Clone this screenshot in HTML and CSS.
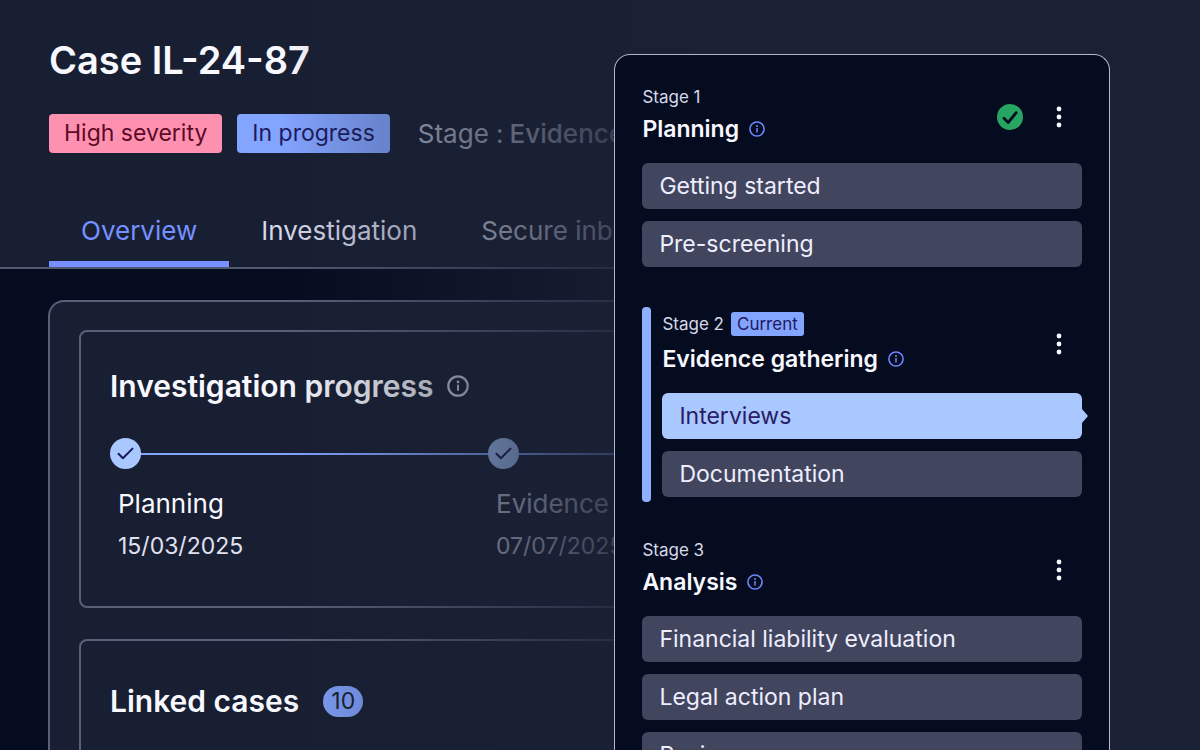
FILE: index.html
```html
<!DOCTYPE html>
<html lang="en">
<head>
<meta charset="utf-8">
<meta name="viewport" content="width=device-width, initial-scale=1">
<title>Case IL-24-87</title>
<link rel="stylesheet" href="styles.css">
</head>
<body>
<svg class="sprite" aria-hidden="true">
  <symbol id="info" viewBox="0 0 24 24"><circle cx="12" cy="12" r="10.6" fill="none" stroke="currentColor" stroke-width="2.4"/><circle cx="12" cy="7.6" r="1.5" fill="currentColor"/><path d="M12 10.6v6.6" stroke="currentColor" stroke-width="2.2"/></symbol>
  <symbol id="dots" viewBox="0 0 6 22"><circle cx="3" cy="3" r="2.4" fill="currentColor"/><circle cx="3" cy="11" r="2.4" fill="currentColor"/><circle cx="3" cy="19" r="2.4" fill="currentColor"/></symbol>
  <symbol id="tick" viewBox="0 0 31 31"><path d="M8.5 15.8l4.4 4.4 9.6-9.6" fill="none" stroke="currentColor" stroke-width="2" stroke-linecap="round" stroke-linejoin="round"/></symbol>
</svg>
<main class="case">
  <header class="case-header">
    <h1 class="case-title">Case IL-24-87</h1>
    <div class="meta">
      <span class="tag tag-severity">High severity</span>
      <span class="tag tag-status">In progress</span>
      <p class="stage-label"><span>Stage :</span> <b>Evidence</b></p>
    </div>
    <nav class="tabs">
      <a class="tab tab-active" href="#overview">Overview</a>
      <a class="tab" href="#investigation">Investigation</a>
      <a class="tab" href="#inbox">Secure inbox</a>
    </nav>
  </header>
  <div class="board">
    <section class="card card-progress">
      <h2 class="card-title">Investigation progress <svg class="title-info"><use href="#info"/></svg></h2>
      <ol class="steps">
        <li class="step">
          <div class="track"><svg class="step-icon"><use href="#tick"/></svg></div>
          <div class="step-name">Planning</div>
          <div class="step-date">15/03/2025</div>
        </li>
        <li class="step">
          <div class="track"><svg class="step-icon"><use href="#tick"/></svg></div>
          <div class="step-name">Evidence</div>
          <div class="step-date">07/07/2025</div>
        </li>
      </ol>
    </section>
    <section class="card card-linked">
      <h2 class="card-title">Linked cases <span class="count">10</span></h2>
    </section>
  </div>
</main>
<aside class="panel">
  <section class="stage">
    <div class="stage-head">
      <div>
        <div class="stage-no">Stage 1</div>
        <h3 class="stage-title">Planning <svg class="info"><use href="#info"/></svg></h3>
      </div>
      <div class="actions">
        <svg class="done" viewBox="0 0 26 26"><circle cx="13" cy="13" r="13" fill="#27a562"/><path d="M7 14.2l4.2 4.3 8-9.8" fill="none" stroke="#070d20" stroke-width="2.8" stroke-linecap="round" stroke-linejoin="round"/></svg>
        <button class="more" aria-label="Planning options"><svg class="dots"><use href="#dots"/></svg></button>
      </div>
    </div>
    <div class="items">
      <button class="item">Getting started</button>
      <button class="item">Pre-screening</button>
    </div>
  </section>
  <section class="stage stage-current">
    <div class="stage-head">
      <div>
        <div class="stage-no">Stage 2 <span class="current">Current</span></div>
        <h3 class="stage-title">Evidence gathering <svg class="info"><use href="#info"/></svg></h3>
      </div>
      <div class="actions">
        <button class="more" aria-label="Evidence gathering options"><svg class="dots"><use href="#dots"/></svg></button>
      </div>
    </div>
    <div class="items">
      <button class="item item-active">Interviews</button>
      <button class="item">Documentation</button>
    </div>
  </section>
  <section class="stage">
    <div class="stage-head">
      <div>
        <div class="stage-no">Stage 3</div>
        <h3 class="stage-title">Analysis <svg class="info"><use href="#info"/></svg></h3>
      </div>
      <div class="actions">
        <button class="more" aria-label="Analysis options"><svg class="dots"><use href="#dots"/></svg></button>
      </div>
    </div>
    <div class="items">
      <button class="item">Financial liability evaluation</button>
      <button class="item">Legal action plan</button>
      <button class="item">Review</button>
    </div>
  </section>
</aside>
</body>
</html>
```
FILE: styles.css
```css
* { box-sizing: border-box; }
body {
  position: relative;
  margin: 0;
  height: 100vh;
  overflow: hidden;
  background: #060c1f;
  color: #f8f8ff;
  font-family: Inter, "Liberation Sans", sans-serif;
}
h1, h2, h3, p, ol { margin: 0; padding: 0; font-weight: 600; }
button { border: 0; font: inherit; color: inherit; cursor: pointer; }
.sprite { position: absolute; width: 0; height: 0; }

.case {
  display: flex;
  flex-direction: column;
  height: 100%;
  overflow: hidden;
  white-space: nowrap;
}
/* Fades the case page out behind the stage panel */
.case::after {
  content: "";
  position: absolute;
  inset: 0;
  background: linear-gradient(90deg, rgba(26, 33, 53, 0) 280px, #1a2135 700px);
  pointer-events: none;
}
.case-header {
  padding: 37px 0 0 49px;
  background: #181f33;
  border-bottom: 2px solid #535970;
}
.case-title { font-size: 38px; line-height: 47px; }
.meta { display: flex; align-items: center; gap: 15px; margin-top: 30px; font-size: 23px; }
.tag { padding: 0 15px; border-radius: 4px; line-height: 39px; }
.tag-severity { background: #ff91b0; color: #5c0a26; }
.tag-status { background: #83a4ff; color: #1d1a60; }
.stage-label { display: flex; gap: 6px; margin-left: 13px; font-size: 26px; font-weight: 400; color: #b4b7ca; }
.stage-label b { font-weight: 500; }
.tabs { display: flex; margin-top: 42px; }
.tab {
  padding: 16px 32px 11px;
  border-bottom: 6px solid transparent;
  color: #d8daec;
  font-size: 26px;
  line-height: 39px;
  text-decoration: none;
}
.tab-active { color: #7690ff; border-color: #7690ff; }

.board {
  flex: 1;
  display: flex;
  flex-direction: column;
  gap: 31px;
  margin: 31px 0 0 48px;
  padding: 28px 29px;
  border: 2px solid #5b6078;
  border-bottom: 0;
  border-radius: 16px 16px 0 0;
  background: #181f33;
}
.card { border: 2px solid #5b6078; border-radius: 8px; padding: 34px 29px 0; }
.card-progress { flex: 0 0 278px; }
.card-linked { flex: 0 0 278px; padding-top: 40px; }
.card-title { display: flex; align-items: center; font-size: 30px; line-height: 40px; }
.title-info { width: 22px; height: 22px; margin-left: 14px; color: #d0d2e2; }
.count {
  margin-left: 24px;
  padding: 0 8px;
  border-radius: 16px;
  background: #83a4ff;
  color: #181f33;
  font-size: 23px;
  font-weight: 400;
  line-height: 31px;
}
.steps { display: flex; margin-top: 32px; list-style: none; }
.step { flex: 0 0 378px; font-weight: 400; }
.track {
  display: flex;
  height: 31px;
  background: linear-gradient(#83a4ff, #83a4ff) center / 100% 2px no-repeat;
}
.step-icon { width: 31px; height: 31px; border-radius: 50%; background: #a9c8ff; color: #1d1a60; }
.step-name { margin: 16px 0 0 8px; font-size: 26px; line-height: 38px; }
.step-date { margin: 6px 0 0 8px; font-size: 23px; line-height: 34px; color: #e0e1f0; }
.step + .step .step-name, .step + .step .step-date { color: #c0c3d6; }

.panel {
  position: absolute;
  top: 54px;
  left: 51.2%;
  right: 7.5%;
  bottom: 0;
  overflow: hidden;
  padding: 30px 27px 0;
  border: 1px solid #b4b7cc;
  border-bottom: 0;
  border-radius: 16px 16px 0 0;
  background: #060c1f;
}
.stage + .stage { margin-top: 36px; }
.stage + .stage-current {
  position: relative;
  margin-top: 40px;
  padding: 5px 0 5px 20px;
}
.stage-current::before {
  content: "";
  position: absolute;
  inset: 0 auto 0 0;
  width: 9px;
  border-radius: 4px;
  background: #8db0ff;
}
.stage-head { display: flex; justify-content: space-between; }
.stage-no { display: flex; align-items: center; gap: 7px; font-size: 17px; line-height: 24px; color: #d6d8ea; }
.current { padding: 0 6px; border-radius: 3px; background: #83a4ff; color: #1d1a60; }
.stage-title { display: flex; align-items: center; margin-top: 6px; font-size: 23px; line-height: 28px; }
.stage-current .stage-title { margin-top: 9px; }
.info { width: 16px; height: 16px; margin-left: 10px; color: #6c88ff; }
.actions { display: flex; align-items: center; gap: 13px; padding-top: 6px; }
.done { width: 26px; height: 26px; }
.more { display: grid; place-items: center; width: 46px; height: 46px; padding: 0; background: none; }
.stage-current .actions { padding-top: 2px; }
.dots { width: 6px; height: 22px; }
.items { display: flex; flex-direction: column; gap: 12px; margin-top: 20px; }
.item {
  position: relative;
  height: 46px;
  padding: 0 17px;
  border-radius: 6px;
  background: #42455e;
  color: #eeeeff;
  font-size: 23px;
  text-align: left;
}
.item-active { background: #a9c8ff; color: #2a1c66; }
.item-active::after {
  content: "";
  position: absolute;
  top: 16px;
  left: 100%;
  border: 7px solid transparent;
  border-left: 6px solid #a9c8ff;
  border-right: 0;
}
```
